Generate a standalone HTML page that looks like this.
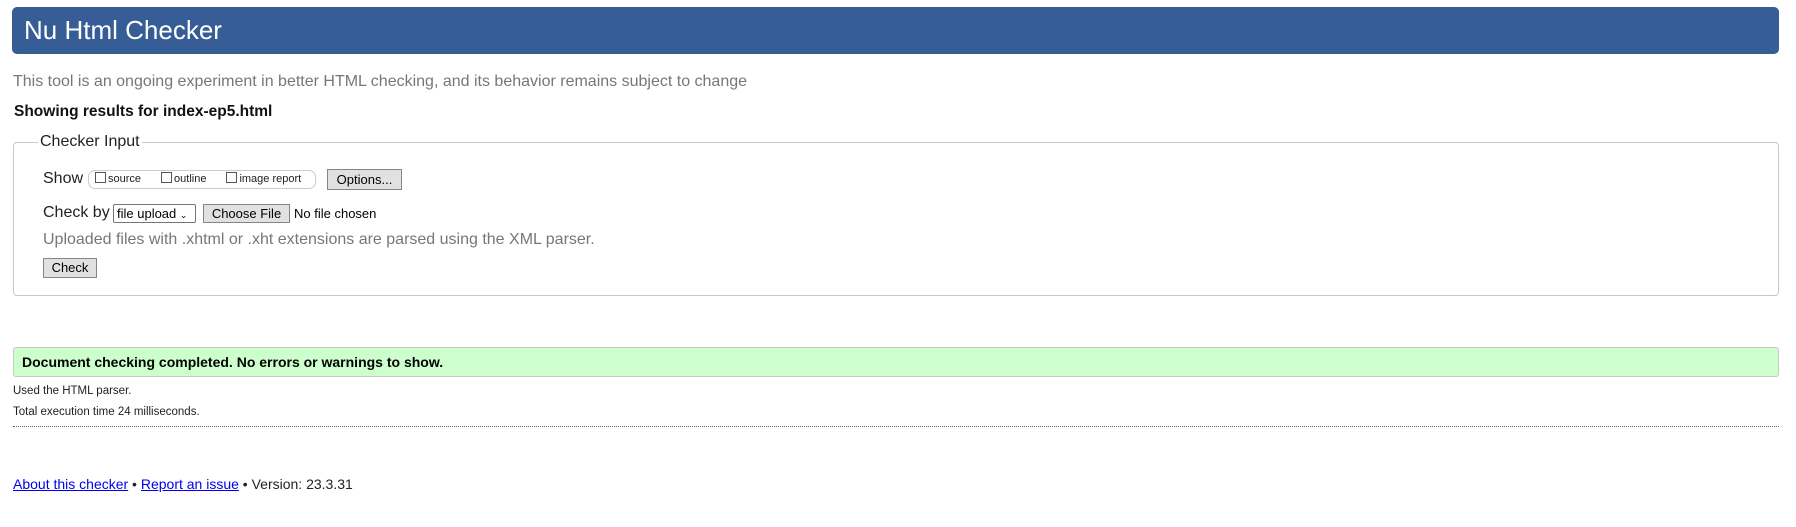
<!DOCTYPE html>
<html><head><style>
body{margin:0;width:1796px;height:527px;background:#fff;font-family:"Liberation Sans",Arial,sans-serif;position:relative;overflow:hidden}
.a{position:absolute;white-space:nowrap}
.hdr{left:12px;top:7px;width:1767px;height:47px;background:#365d95;border-radius:5px}
.btn{position:absolute;background:#e1e1e1;border:1px solid #858585;box-sizing:border-box;font-size:13px;text-align:center;color:#000}
.cb{display:inline-block;width:11px;height:11px;border:1px solid #555;vertical-align:-1px;margin-right:2px;box-sizing:border-box}
a{color:#00e}
</style></head><body>
<div class="a hdr"></div>
<div class="a" style="left:24px;top:15px;font-size:26px;color:#fff;line-height:30px">Nu Html Checker</div>
<div class="a" style="left:13px;top:73px;font-size:16px;color:#777;line-height:18px">This tool is an ongoing experiment in better HTML checking, and its behavior remains subject to change</div>
<div class="a" style="left:14px;top:103px;font-size:15.5px;font-weight:bold;color:#111;line-height:18px">Showing results for index-ep5.html</div>
<div class="a" style="left:13px;top:142px;width:1766px;height:154px;border:1px solid #c8c8c8;border-radius:4px;box-sizing:border-box"></div>
<div class="a" style="left:38px;top:132px;font-size:16px;color:#222;background:#fff;padding:0 2px;line-height:20px">Checker Input</div>
<div class="a" style="left:43px;top:170px;font-size:16px;color:#222;line-height:18px">Show</div>
<div class="a" style="left:88px;top:170px;width:228px;height:19px;border:1px solid #ccc;border-radius:7px;box-sizing:border-box;font-size:11px;line-height:17px;color:#222;padding-left:6px">
<span class="cb"></span>source<span style="display:inline-block;width:20px"></span><span class="cb"></span>outline<span style="display:inline-block;width:20px"></span><span class="cb"></span>image report</div>
<div class="btn" style="left:327px;top:169px;width:75px;height:21px;line-height:19px">Options...</div>
<div class="a" style="left:43px;top:204px;font-size:16px;color:#222;line-height:18px">Check by</div>
<div class="a" style="left:113px;top:204px;width:83px;height:19px;border:1px solid #767676;box-sizing:border-box;font-size:13px;line-height:17px;padding-left:3px;border-radius:2px">file upload <span style="font-size:9px">&#8964;</span></div>
<div class="btn" style="left:203px;top:204px;width:87px;height:19px;line-height:17px">Choose File</div>
<div class="a" style="left:294px;top:205px;font-size:13px;color:#000;line-height:17px">No file chosen</div>
<div class="a" style="left:43px;top:231px;font-size:16px;color:#777;line-height:18px">Uploaded files with .xhtml or .xht extensions are parsed using the XML parser.</div>
<div class="btn" style="left:43px;top:258px;width:54px;height:20px;line-height:18px">Check</div>
<div class="a" style="left:13px;top:347px;width:1766px;height:30px;background:#ccffcc;border:1px solid #c8c8c8;border-radius:3px;box-sizing:border-box"></div>
<div class="a" style="left:22px;top:354px;font-size:14px;font-weight:bold;color:#000;line-height:16px">Document checking completed. No errors or warnings to show.</div>
<div class="a" style="left:13px;top:384px;font-size:11.5px;color:#222;line-height:14px">Used the HTML parser.</div>
<div class="a" style="left:13px;top:405px;font-size:11.5px;color:#222;line-height:14px">Total execution time 24 milliseconds.</div>
<div class="a" style="left:13px;top:426px;width:1766px;border-top:1px dotted #666"></div>
<div class="a" style="left:13px;top:476px;font-size:14px;color:#222;line-height:16px"><a href="#">About this checker</a> • <a href="#">Report an issue</a> • Version: 23.3.31</div>
</body></html>
